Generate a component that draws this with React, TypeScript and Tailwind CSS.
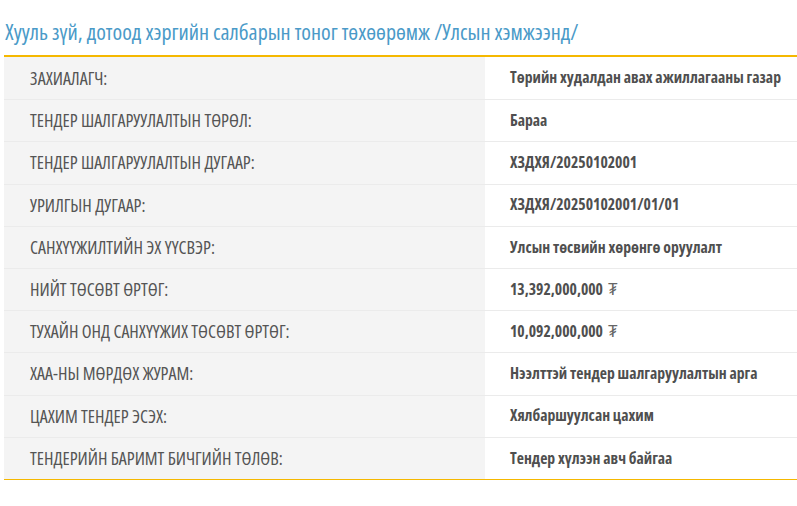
const rows: [string, string, boolean?][] = [
  ['ЗАХИАЛАГЧ:', 'Төрийн худалдан авах ажиллагааны газар'],
  ['ТЕНДЕР ШАЛГАРУУЛАЛТЫН ТӨРӨЛ:', 'Бараа'],
  ['ТЕНДЕР ШАЛГАРУУЛАЛТЫН ДУГААР:', 'ХЗДХЯ/20250102001'],
  ['УРИЛГЫН ДУГААР:', 'ХЗДХЯ/20250102001/01/01'],
  ['САНХҮҮЖИЛТИЙН ЭХ ҮҮСВЭР:', 'Улсын төсвийн хөрөнгө оруулалт'],
  ['НИЙТ ТӨСӨВТ ӨРТӨГ:', '13,392,000,000', true],
  ['ТУХАЙН ОНД САНХҮҮЖИХ ТӨСӨВТ ӨРТӨГ:', '10,092,000,000', true],
  ['ХАА-НЫ МӨРДӨХ ЖУРАМ:', 'Нээлттэй тендер шалгаруулалтын арга'],
  ['ЦАХИМ ТЕНДЕР ЭСЭХ:', 'Хялбаршуулсан цахим'],
  ['ТЕНДЕРИЙН БАРИМТ БИЧГИЙН ТӨЛӨВ:', 'Тендер хүлээн авч байгаа'],
];

export default function App() {
  return (
    <div className="w-[797px] h-[506px] bg-white overflow-hidden font-['Open_Sans',sans-serif] font-stretch-[75%]">
      <h2 className="pt-[16px] pl-[5px] h-[55px] text-[22px] leading-[30px] text-[#4a9ac8]">
        Хууль зүй, дотоод хэргийн салбарын тоног төхөөрөмж /Улсын хэмжээнд/
      </h2>
      <div className="ml-[4px] border-t-2 border-b border-[#f5b800]">
        {rows.map(([label, value, money], i) => (
          <div
            key={label}
            className={`flex h-[42.2px] ${i > 0 ? 'border-t border-[#ebebeb]' : ''}`}
          >
            <div className="w-[481px] bg-[#f4f4f4] pl-[26px] flex items-center text-[18px] text-[#555]">
              {label}
            </div>
            <div className="flex-1 pl-[25px] flex items-center text-[15.7px] font-bold text-[#4f4f4f]">
              {value}
              {money && <span className="ml-[5px] font-normal text-[#666]">₮</span>}
            </div>
          </div>
        ))}
      </div>
    </div>
  );
}
